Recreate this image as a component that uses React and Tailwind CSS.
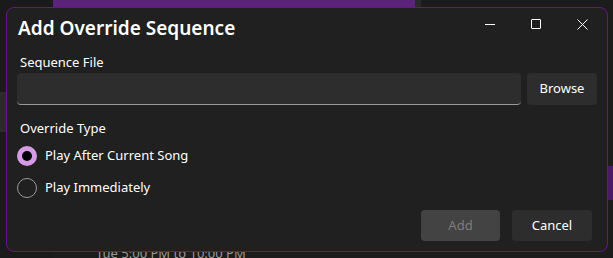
import React, { useState } from "react";

export default function App() {
  const [mode, setMode] = useState("after");

  return (
    <div
      className="relative w-[613px] h-[258px] overflow-hidden bg-[#1c1c1c] text-white"
      style={{ fontFamily: '"Noto Sans", "Open Sans", sans-serif' }}
    >
      {/* background app peeking behind the dialog */}
      <div className="absolute left-0 top-0 w-[53px] h-full bg-[#1a1a1a]" />
      <div className="absolute left-[53px] top-0 w-[362px] h-[7px] bg-[#5b2479]" />
      <div className="absolute left-[415px] top-0 w-[6px] h-[7px] bg-[#2a2a2a]" />
      <div className="absolute left-0 top-[92px] w-[6px] h-[40px] bg-[#2a2a2a]" />
      <div className="absolute right-0 top-[166px] w-[6px] h-[34px] bg-[#4a1a66]" />
      <div className="absolute left-[96px] top-[244px] text-[13px] text-[#9a9a9a]">
        Tue 5:00 PM to 10:00 PM
      </div>

      {/* dialog */}
      <div className="absolute left-[6px] top-[7px] w-[602px] h-[245px] rounded-[8px] border border-[#6c1190] bg-[#202020] flex flex-col">
        <div className="flex items-start justify-between h-[40px]">
          <div className="pl-[11px] pt-[6px] text-[19px] font-semibold leading-[28px]">
            Add Override Sequence
          </div>
          <div className="flex items-center h-[32px] pr-[2px]">
            <div className="w-[46px] h-full flex items-center justify-center">
              <div className="w-[10px] h-px bg-white" />
            </div>
            <div className="w-[46px] h-full flex items-center justify-center">
              <div className="w-[10px] h-[10px] border border-white rounded-[1px]" />
            </div>
            <div className="w-[46px] h-full flex items-center justify-center">
              <svg width="11" height="11" viewBox="0 0 11 11" fill="none" stroke="white" strokeWidth="1">
                <path d="M0.5 0.5 L10.5 10.5 M10.5 0.5 L0.5 10.5" />
              </svg>
            </div>
          </div>
        </div>

        <div className="px-[10px] flex flex-col">
          <div className="pl-[3px] text-[13px] leading-[20px] mt-[4px]">Sequence File</div>
          <div className="flex gap-[6px] mt-[1px]">
            <div className="flex-1 h-[32px] rounded-[4px] bg-[#2d2d2d] border-b border-[#9a9a9a]" />
            <button className="w-[70px] h-[32px] rounded-[4px] bg-[#2d2d2d] text-[13px]">Browse</button>
          </div>

          <div className="pl-[3px] text-[13px] leading-[20px] mt-[13px]">Override Type</div>

          <div className="flex flex-col mt-[2px]">
            <button className="flex items-center gap-[8px] h-[32px] text-[13px]" onClick={() => setMode("after")}>
              <span
                className={
                  mode === "after"
                    ? "w-[20px] h-[20px] rounded-full bg-[#d59be6] flex items-center justify-center"
                    : "w-[20px] h-[20px] rounded-full border border-[#9a9a9a]"
                }
              >
                {mode === "after" && <span className="w-[10px] h-[10px] rounded-full bg-black" />}
              </span>
              Play After Current Song
            </button>
            <button className="flex items-center gap-[8px] h-[32px] text-[13px]" onClick={() => setMode("now")}>
              <span
                className={
                  mode === "now"
                    ? "w-[20px] h-[20px] rounded-full bg-[#d59be6] flex items-center justify-center"
                    : "w-[20px] h-[20px] rounded-full border border-[#9a9a9a]"
                }
              >
                {mode === "now" && <span className="w-[10px] h-[10px] rounded-full bg-black" />}
              </span>
              Play Immediately
            </button>
          </div>
        </div>

        <div className="mt-auto flex justify-end gap-[12px] pr-[15px] pb-[10px]">
          <button className="w-[79px] h-[31px] rounded-[4px] bg-[#434343] text-[13px] text-[#7d7d7d]">Add</button>
          <button className="w-[80px] h-[31px] rounded-[4px] bg-[#2d2d2d] text-[13px]">Cancel</button>
        </div>
      </div>
    </div>
  );
}
